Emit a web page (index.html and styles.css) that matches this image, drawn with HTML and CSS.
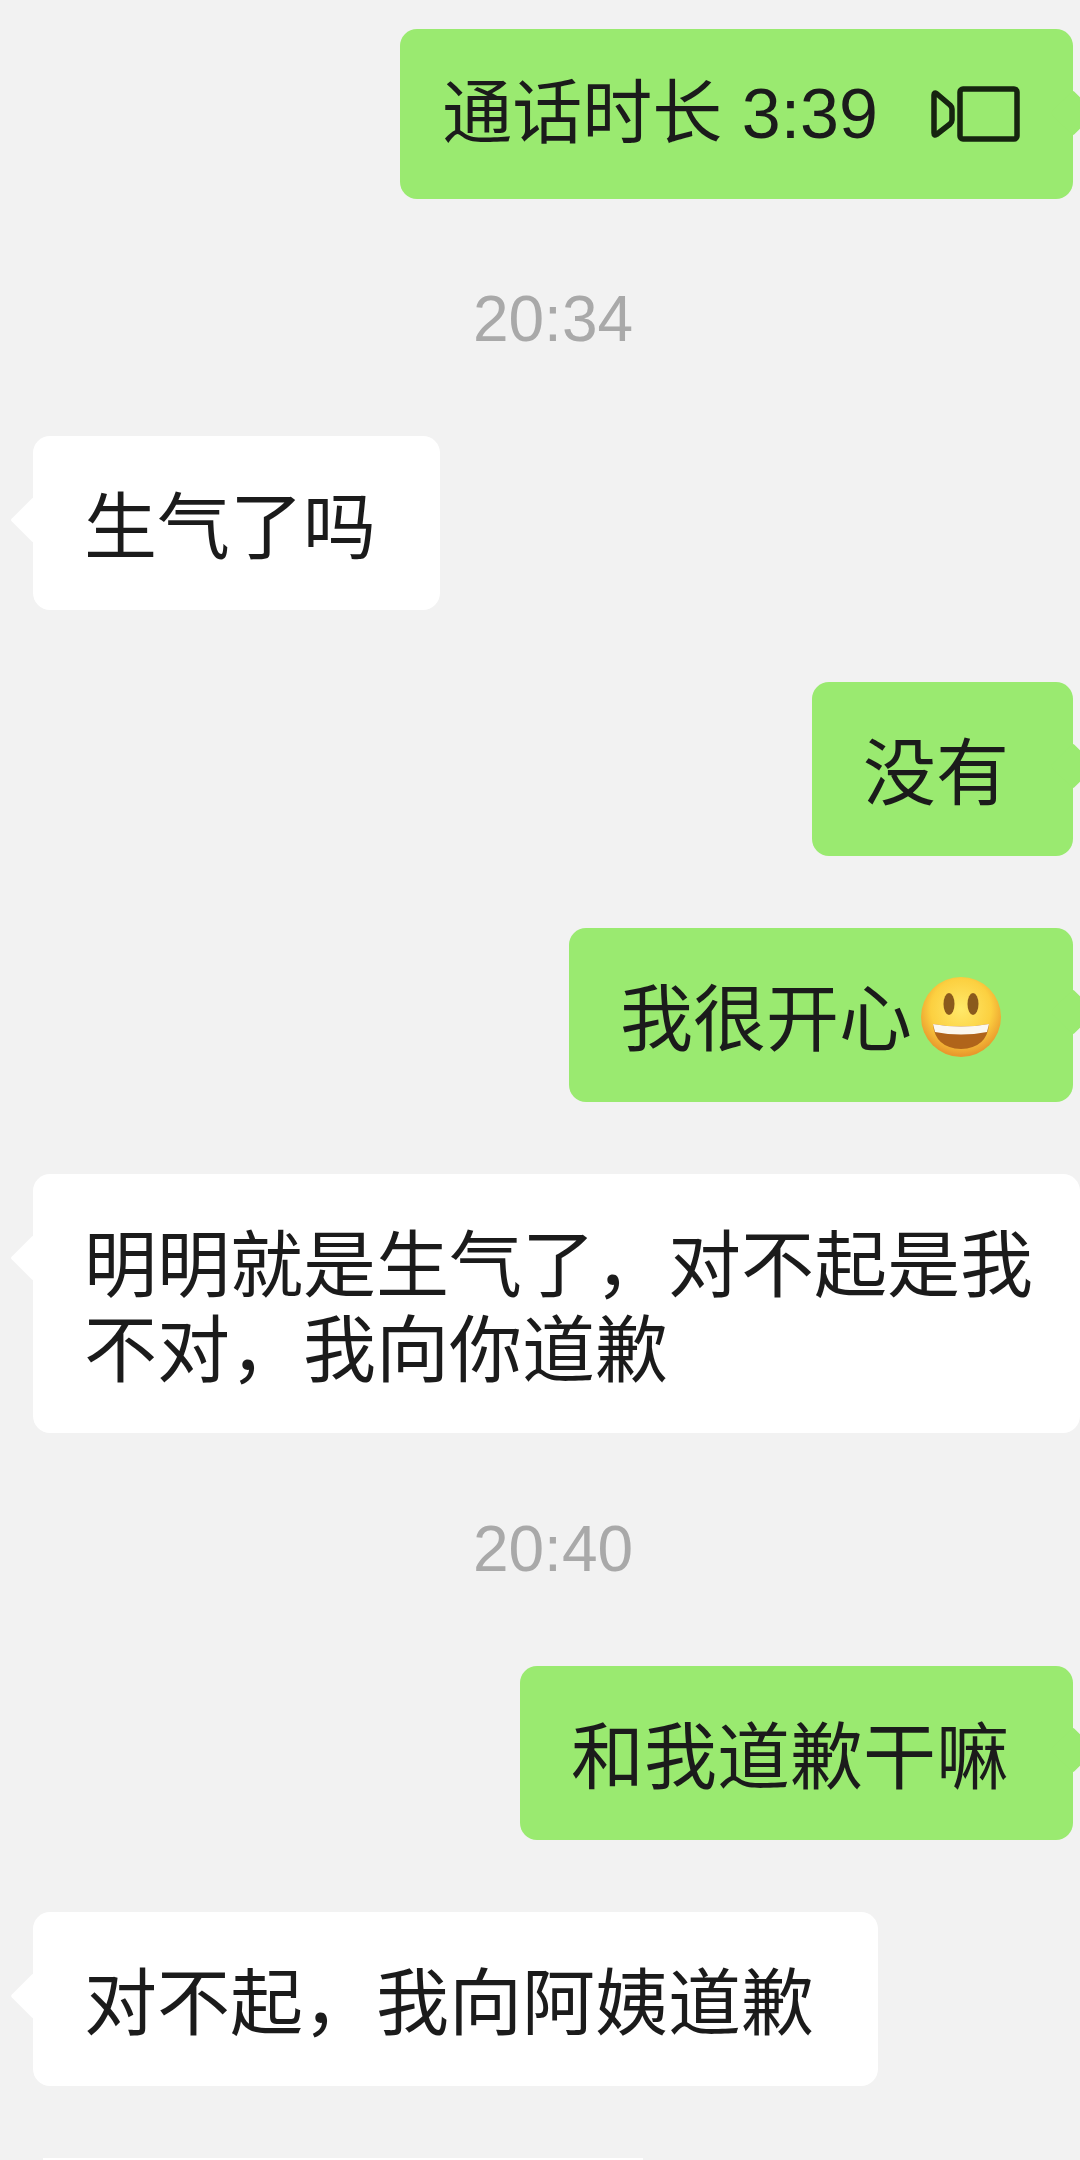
FILE: index.html
```html
<!DOCTYPE html>
<html lang="zh-CN">
	<head>
		<meta charset="utf-8">
		<link rel="stylesheet" href="styles.css">
	</head>
	<body>
		<section class="chat">
			<div class="row right">
				<div class="bubble green call">
					<span>通话时长 3:39</span>
					<svg class="video-icon" viewBox="0 0 90 56" fill="none" stroke="#16240f" stroke-width="5.500" stroke-linejoin="round">
						<path d="M4 9 Q4 6 6.500 7.500 L20 19 Q22 21 22 23 L22 34 Q22 36 20 38 L6.500 48.500 Q4 50 4 47 Z"/>
						<rect x="30" y="3" width="57" height="50" rx="3"/>
					</svg>
				</div>
			</div>
			<div class="time">20:34</div>
			<div class="row">
				<div class="bubble white">生气了吗</div>
			</div>
			<div class="row right">
				<div class="bubble green">没有</div>
			</div>
			<div class="row right">
				<div class="bubble green happy">
					<span>我很开心</span>
					<svg class="emoji" viewBox="0 0 80 80">
						<defs>
							<radialGradient id="face" cx="50%" cy="40%" r="58%">
								<stop offset="0%" stop-color="#ffe96a"/>
								<stop offset="65%" stop-color="#fcd040"/>
								<stop offset="100%" stop-color="#e9992c"/>
							</radialGradient>
						</defs>
						<circle cx="40" cy="40" r="40" fill="url(#face)"/>
						<ellipse cx="28" cy="27" rx="5.500" ry="11" fill="#8a5a1c"/>
						<ellipse cx="52" cy="27" rx="5.500" ry="11" fill="#8a5a1c"/>
						<path d="M12 47 Q40 52 68 47 Q66 71 40 72 Q14 71 12 47 Z" fill="#b0641a"/>
						<path d="M12 47 Q40 52 68 47 L66 55 Q40 60 14 55 Z" fill="#fbf8ef"/>
					</svg>
				</div>
			</div>
			<div class="row">
				<div class="bubble white wide">明明就是生气了，对不起是我不对，我向你道歉</div>
			</div>
			<div class="time late">20:40</div>
			<div class="row right">
				<div class="bubble green">和我道歉干嘛</div>
			</div>
			<div class="row">
				<div class="bubble white">对不起，我向阿姨道歉</div>
			</div>
			<div class="row">
				<div class="bubble white cut"></div>
			</div>
		</section>
	</body>
</html>
```
FILE: styles.css
```css
html, body {
	margin: 0;
	padding: 0;
	height: 2160px;
	overflow: hidden;
}
body {
	font-family: "Liberation Sans", "Noto Sans CJK SC", sans-serif;
	font-size: 73px;
	line-height: 85px;
	color: #1b1b1b;
	background-color: #f2f2f2;
}

.chat {
	display: flex;
	flex-direction: column;
	gap: 72px;
	padding: 29px 7px 0 33px;
}
.row {
	display: flex;
}
.row.right {
	justify-content: flex-end;
}

.time {
	height: 93px;
	line-height: 96px;
	text-align: center;
	font-size: 64px;
	color: #a9a9a9;
}
.time.late {
	height: 89px;
	line-height: 89px;
}

.bubble {
	position: relative;
	padding: 49px 64px 40px 51px;
	border-radius: 17px;
}
.bubble::after {
	content: "";
	position: absolute;
	top: 68px;
	width: 32px;
	height: 32px;
	border-radius: 2px;
	transform: rotate(45deg);
}
.white {
	background-color: #fff;
}
.white::after {
	left: -16px;
	background-color: #fff;
}
.green {
	background-color: #9aea70;
}
.green::after {
	right: -16px;
	background-color: #9aea70;
}

.call {
	display: flex;
	align-items: center;
	height: 170px;
	box-sizing: border-box;
	padding: 0 53px 0 42px;
	font-size: 70px;
}
.video-icon {
	width: 90px;
	height: 56px;
	margin-left: 52px;
}

.happy {
	display: flex;
	align-items: center;
}
.emoji {
	width: 80px;
	height: 80px;
	margin: 0 8px 5px 9px;
}

.wide {
	flex-shrink: 0;
	width: 1047px;
	padding-right: 40px;
	box-sizing: border-box;
}

.cut {
	flex-shrink: 0;
	width: 600px;
	height: 2px;
	margin-left: 10px;
	padding: 0;
	border-radius: 0;
}
.cut::after {
	display: none;
}
```
